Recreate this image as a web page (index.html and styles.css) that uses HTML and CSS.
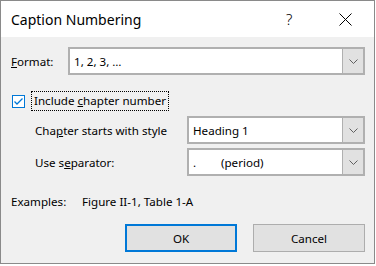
FILE: index.html
```html
<!DOCTYPE html>
<html>
<head>
<meta charset="utf-8">
<link rel="stylesheet" href="styles.css">
</head>
<body>
<div class="dialog">
  <div class="titlebar">
    <span class="title">Caption Numbering</span>
    <span class="help">?</span>
    <span class="close"><svg width="13" height="13" viewBox="0 0 13 13"><path d="M0.5 0.5L12.5 12.5M12.5 0.5L0.5 12.5" stroke="#000" stroke-width="1"/></svg></span>
  </div>
  <div class="content">
    <div class="row format-row">
      <span class="label"><u>F</u>ormat:</span>
      <div class="combo wide"><span class="value">1, 2, 3, …</span><span class="drop"><svg width="9" height="5" viewBox="0 0 9 5"><path d="M0.5 0.5L4.5 4.5L8.5 0.5" fill="none" stroke="#606060"/></svg></span></div>
    </div>
    <div class="check-row">
      <span class="checkbox"><svg width="11" height="11" viewBox="0 0 11 11"><path d="M1.5 5.5L4 8L9.5 2.5" fill="none" stroke="#0078d7" stroke-width="1.3"/></svg></span>
      <span class="check-label">Include <u>c</u>hapter number</span>
    </div>
    <div class="row sub-row">
      <span class="sublabel">Cha<u>p</u>ter starts with style</span>
      <div class="combo narrow"><span class="value">Heading 1</span><span class="drop"><svg width="9" height="5" viewBox="0 0 9 5"><path d="M0.5 0.5L4.5 4.5L8.5 0.5" fill="none" stroke="#606060"/></svg></span></div>
    </div>
    <div class="row sub-row second">
      <span class="sublabel">Use s<u>e</u>parator:</span>
      <div class="combo narrow"><span class="value"><span class="sep">.</span>(period)</span><span class="drop"><svg width="9" height="5" viewBox="0 0 9 5"><path d="M0.5 0.5L4.5 4.5L8.5 0.5" fill="none" stroke="#606060"/></svg></span></div>
    </div>
    <div class="examples">
      <span class="ex-label">Examples:</span>
      <span>Figure II-1, Table 1-A</span>
    </div>
    <div class="buttons">
      <button class="btn ok">OK</button>
      <button class="btn">Cancel</button>
    </div>
  </div>
</div>
</body>
</html>
```

FILE: styles.css
```css
html, body {
  margin: 0;
  padding: 0;
  background: #ffffff;
}
body {
  font-family: "Noto Sans", "Open Sans", sans-serif;
  font-size: 11.6px;
  color: #000;
}
.dialog {
  width: 373px;
  height: 262px;
  border: 1px solid #8a8a8a;
  background: #f0f0f0;
  display: flex;
  flex-direction: column;
}
.titlebar {
  height: 36px;
  background: #fff;
  display: flex;
  align-items: center;
}
.title {
  font-size: 14px;
  margin-left: 10px;
  flex: 1;
  margin-top: 1px;
}
.help {
  font-size: 15px;
  width: 12px;
  margin-right: 41px;
  color: #000;
  font-weight: 300;
}
.close {
  display: flex;
  width: 13px;
  margin-right: 22px;
}
.content {
  flex: 1;
  display: flex;
  flex-direction: column;
  padding: 10px 9px 0 10px;
}
.row {
  display: flex;
  align-items: center;
}
.label {
  width: 57px;
}
.combo {
  height: 24px;
  border: 2px solid #b0b0b0;
  background: #fff;
  display: flex;
  align-items: center;
}
.combo.wide { flex: 1; }
.combo.narrow { width: 174px; margin-left: auto; }
.value {
  flex: 1;
  padding-left: 4px;
}
.sep {
  display: inline-block;
  width: 28px;
}
.drop {
  width: 20px;
  height: 24px;
  background: #e1e1e1;
  border-left: 1px solid #b0b0b0;
  display: flex;
  align-items: center;
  justify-content: center;
}
.check-row {
  display: flex;
  align-items: center;
  margin-top: 16px;
  height: 20px;
}
.checkbox {
  width: 11px;
  height: 11px;
  border: 1px solid #0078d7;
  background: #fff;
  display: flex;
  margin-left: 1px;
}
.check-label {
  margin-left: 6px;
  border: 1px dotted #000;
  padding: 0 2px;
  height: 18px;
  line-height: 18px;
}
.sub-row {
  margin-top: 5px;
}
.sub-row.second { margin-top: 4px; }
.sublabel {
  margin-left: 24px;
}
.examples {
  margin-top: 18px;
  display: flex;
}
.ex-label {
  width: 71px;
}
.buttons {
  display: flex;
  justify-content: flex-end;
  gap: 16px;
  margin-top: 15px;
}
.btn {
  font-family: inherit;
  font-size: 11.6px;
  width: 112px;
  height: 28px;
  background: #e1e1e1;
  border: 1px solid #adadad;
  padding: 0;
  color: #000;
}
.btn.ok {
  border: 2px solid #0078d7;
}
```
